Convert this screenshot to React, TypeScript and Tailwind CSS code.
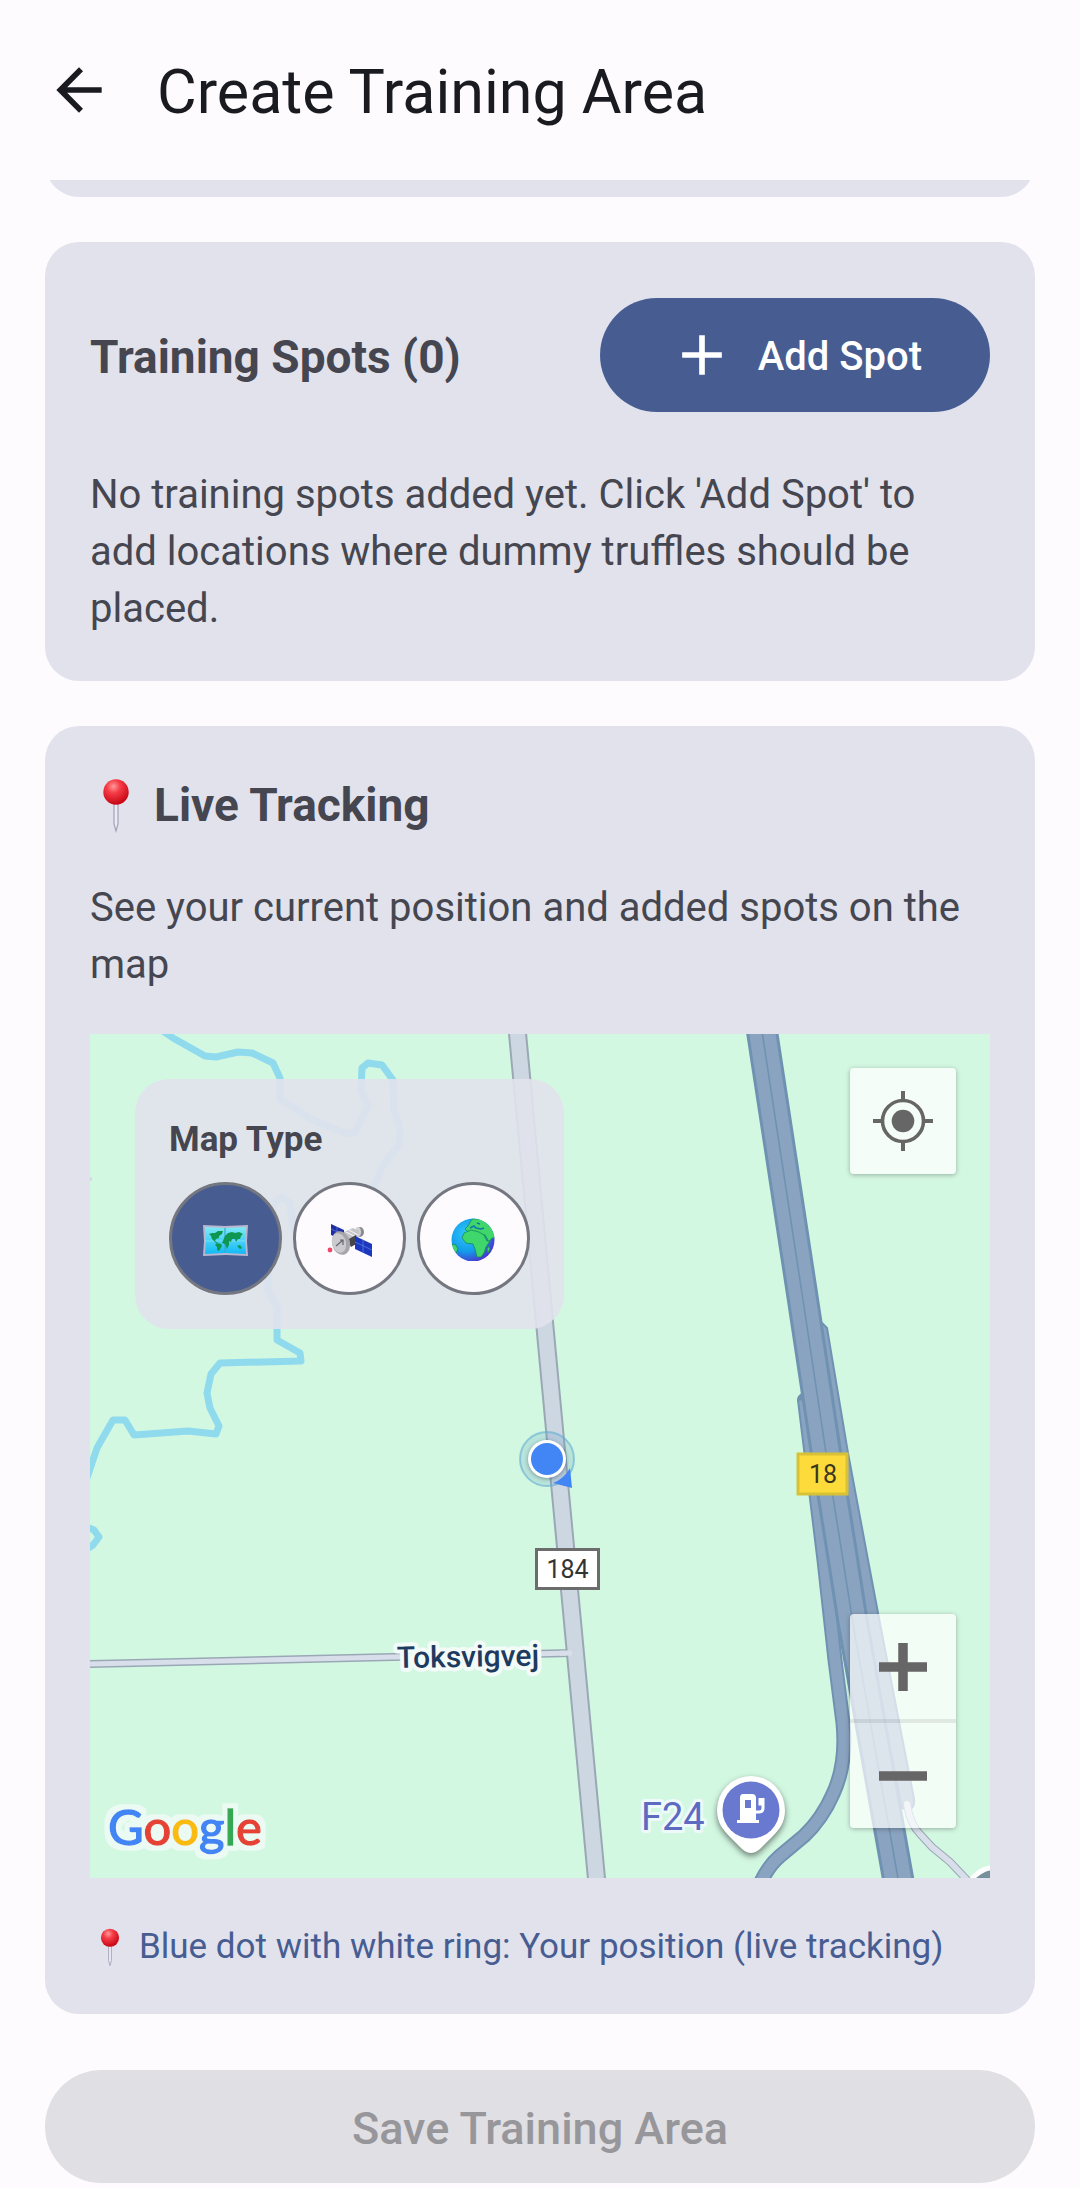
import { useState } from 'react';
import type { ReactNode } from 'react';
import { MdAdd, MdArrowBack } from 'react-icons/md';

type MapType = 'map' | 'satellite' | 'terrain';

const PinIcon = ({ className }: { className: string }) => (
    <svg viewBox="0 0 46 56" className={className} aria-hidden="true">
        <defs>
            <radialGradient id="pin-head" cx="0.4" cy="0.28" r="0.75">
                <stop offset="0" stopColor="#ff9a9a" />
                <stop offset="0.35" stopColor="#f63d48" />
                <stop offset="1" stopColor="#c3000f" />
            </radialGradient>
        </defs>
        <path d="M21 26h4l0 21-2 7-2-7z" fill="#eceaf6" stroke="#a3a1b8" strokeWidth="1.2" />
        <circle cx="23" cy="15" r="12.7" fill="url(#pin-head)" />
    </svg>
);

const WorldMapIcon = () => (
    <svg viewBox="0 0 45 45" className="size-[45px]" aria-hidden="true">
        <defs>
            <linearGradient id="sea" x1="0" y1="0" x2="0" y2="1">
                <stop offset="0" stopColor="#7fe9f5" />
                <stop offset="1" stopColor="#12b9f7" />
            </linearGradient>
        </defs>
        <path d="M0 9l22 1 23-1-1 16 1 15-22-1-23 1 1-15z" fill="#b9b6cf" />
        <path d="M2 11l20 1 21-1-1 14 1 13-21-1-20 1 1-13z" fill="url(#sea)" />
        <path d="M22 12v25" stroke="#3aa5cf" strokeWidth="1.2" />
        <path d="M2 25h40" stroke="#a9f0fa" strokeWidth="0.8" opacity="0.6" />
        <path
            d="M6 18l3-1 3 0 3-2 5 0-1 3-3 2 0 2-3 1-1 2 3 2-2 0-4-4-1-3zM14 27l4 1 1 2-3 5-2-1 0-3-2-2zM22 20l3-3 4-1 3 1 4-1 4 2-2 2-1 3-2 0-2 3-1-3-3 0-1 3-2-1 0 4-2 4-2-5-3-1zM34 30l3-1 2 3-2 1z"
            fill="#109653"
        />
    </svg>
);

const SatelliteIcon = () => (
    <svg viewBox="0 0 45 45" className="size-[45px]" aria-hidden="true">
        <path d="M4 8l13 6v11L4 19z" fill="#1c2fa5" />
        <path d="M4 13l13 6M10 11v10" stroke="#5a75dd" strokeWidth="0.8" />
        <ellipse cx="33" cy="16" rx="4" ry="5" fill="#8b8b92" />
        <ellipse cx="31" cy="16" rx="3" ry="5" fill="#d0d0d4" />
        <path d="M17 16l9-4 6 3-1 7-10 6-4-4z" fill="#c4c4c9" />
        <path d="M19 16l10 5M22 14l9 5" stroke="#f1f1f3" strokeWidth="1.2" />
        <path d="M20 24l9-5 2 8-7 4z" fill="#45454d" />
        <path d="M28 20l17 8v13l-17-8z" fill="#1b37bd" />
        <path d="M28 26l17 8M36 24v13" stroke="#5a78e6" strokeWidth="0.8" />
        <ellipse cx="14" cy="27" rx="9" ry="12" fill="#a5a5aa" transform="rotate(-14 14 27)" />
        <ellipse cx="12" cy="27" rx="7" ry="10" fill="#cbcbcf" transform="rotate(-14 12 27)" />
        <path d="M9 30l7-6M13 24l3 0v5" fill="none" stroke="#65656c" strokeWidth="1.2" />
        <circle cx="3" cy="34" r="2.4" fill="#ee4868" />
    </svg>
);

const GlobeIcon = () => (
    <svg viewBox="0 0 45 45" className="size-[45px]" aria-hidden="true">
        <defs>
            <radialGradient id="ocean" cx="0.35" cy="0.35" r="0.7">
                <stop offset="0" stopColor="#30c8fa" />
                <stop offset="0.6" stopColor="#139bea" />
                <stop offset="1" stopColor="#4a35cf" />
            </radialGradient>
            <clipPath id="globe-clip">
                <circle cx="22" cy="24" r="21.5" />
            </clipPath>
        </defs>
        <circle cx="22" cy="24" r="21.5" fill="url(#ocean)" />
        <g clipPath="url(#globe-clip)" fill="#3fd66c" stroke="#168a55" strokeWidth="0.8">
            <path d="M17 10l4-7 12 0 9 8 3 11-4 0-3 4-4-7-8-2-6-1-4-1-2-2z" />
            <path d="M13 17l7-3 8 2 5 3 3 6 3 0-4 6-2 6-3 4-4 0-2-8-2-5-7-1-4-5z" />
            <path d="M0 28l5 1 2 4-3 6-5-3zM36 33l2-3 1 3-2 4z" />
        </g>
        <path d="M19 12l4-2 2 2 5 1 3-1M26 7l3 1" fill="none" stroke="#1276a8" strokeWidth="1.6" />
    </svg>
);

const MAP_TYPES: { id: MapType; label: string; icon: ReactNode }[] = [
    { id: 'map', label: 'Map', icon: <WorldMapIcon /> },
    { id: 'satellite', label: 'Satellite', icon: <SatelliteIcon /> },
    { id: 'terrain', label: 'Terrain', icon: <GlobeIcon /> },
];

// Roads
const HIGHWAY = 'M671.5 -6L713 266L736 419L743 463L753 526L763 590L809 850';
const SLIP_LEFT = 'M714.5 366L721 419L734 526L745 626L753 689Q757 730 743 760Q732 785 714 802L690 822Q678 832 670 850';
const FOOTPATH = 'M817 770Q820 790 830 800L842 813L860 828L879 848';

const MapCanvas = () => (
    <svg
        viewBox="0 0 900 844"
        preserveAspectRatio="xMidYMid slice"
        className="block size-full font-[Roboto,sans-serif]"
        role="img"
        aria-label="Map"
    >
        <defs>
            <filter id="logo-halo" x="-10%" y="-20%" width="120%" height="140%">
                <feMorphology in="SourceAlpha" operator="dilate" radius="5" result="wide" />
                <feGaussianBlur in="wide" stdDeviation="0.7" result="soft" />
                <feFlood floodColor="#ebfaf2" />
                <feComposite in2="soft" operator="in" result="halo" />
                <feMerge>
                    <feMergeNode in="halo" />
                    <feMergeNode in="SourceGraphic" />
                </feMerge>
            </filter>
        </defs>

        <rect width="900" height="844" fill="#d3f8e2" />

        {/* Streams */}
        <g fill="none" stroke="#90daee" strokeWidth="7" strokeLinejoin="round">
            <path d="M73 -3L83 4L115 22L126 23L148 18L162 19L183 29L190 44L190 65L223 86L257 100L265 98L278 72L271 56L272 34L278 29L292 31L303 46L304 76L310 96L309 111L292 133L285 150L260 196L215 215L203 193L200 169L192 163L185 168L178 200L178 256L187 273L187 306L210 319L211 327L130 329L121 340L117 359L120 374L129 392L126 400L98 397L44 401L35 386L23 386L7 414L-3 444" />
            <path d="M-3 493L4 496L9 503L3 511L-3 515" />
        </g>
        <circle cx="0" cy="145" r="2" fill="#cfd5e4" />

        {/* Toksvigvej */}
        <path d="M-2 630L303 623L482 619" fill="none" stroke="#9aa8b5" strokeWidth="8" />
        <path d="M-2 630L303 623L482 619" fill="none" stroke="#d8dfeb" strokeWidth="5" />

        {/* Road 184 */}
        <path d="M427 -6L507 850" stroke="#9aa8b5" strokeWidth="19" />
        <path d="M427 -6L507 850" stroke="#cdd7e2" strokeWidth="15" />
        <path d="M470 619.3L482 619" stroke="#d8dfeb" strokeWidth="5" />

        {/* Highway 18 with slip roads */}
        <path d={SLIP_LEFT} fill="none" stroke="#7092b2" strokeWidth="15" strokeLinecap="round" />
        <path d={SLIP_LEFT} fill="none" stroke="#8aa3c0" strokeWidth="11" />
        <path d="M731 288L737 294L758 419L778 526L788 579L824 765Q825 774 818 776L812 774L760 520Z" fill="#8aa3c0" stroke="#7092b2" strokeWidth="2" />
        <path d={HIGHWAY} fill="none" stroke="#7092b2" strokeWidth="32" />
        <path d={HIGHWAY} fill="none" stroke="#8aa3c0" strokeWidth="26" />
        <path d={HIGHWAY} fill="none" stroke="#7092b2" strokeWidth="1.6" />
        <path d={FOOTPATH} fill="none" stroke="#9aa8b5" strokeWidth="8" />
        <path d={FOOTPATH} fill="none" stroke="#d8dfeb" strokeWidth="6" strokeLinecap="round" />

        {/* Road signs */}
        <rect x="446.5" y="515.5" width="62" height="39" fill="#fff" stroke="#6c6c6c" strokeWidth="3" />
        <text x="477.5" y="544" fontSize="25" textAnchor="middle" fill="#333">184</text>
        <rect x="708" y="420" width="49" height="40" fill="#fddb3a" stroke="#d9c136" strokeWidth="3" />
        <text x="733" y="449" fontSize="25" textAnchor="middle" fill="#3a3720">18</text>

        <text
            x="307"
            y="634"
            fontSize="30"
            fontWeight="500"
            fill="#1f3a5f"
            stroke="#f3fbf9"
            strokeWidth="8"
            strokeLinejoin="round"
            paintOrder="stroke"
            transform="rotate(-1 307 634)"
        >
            Toksvigvej
        </text>

        {/* Fuel station */}
        <text
            x="551"
            y="796"
            fontSize="38"
            fill="#5c6bc0"
            stroke="#edf9fb"
            strokeWidth="6"
            strokeLinejoin="round"
            paintOrder="stroke"
        >
            F24
        </text>
        <g>
            <path
                d="M661 742a34 34 0 0 1 34 34c0 13-6 20-14 28l-11 11q-9 8-18 0l-11-11c-8-8-14-15-14-28a34 34 0 0 1 34-34z"
                fill="#fff"
                className="drop-shadow-[0_3px_3px_rgba(0,0,0,0.5)]"
            />
            <circle cx="661" cy="776" r="28.5" fill="#6979d0" />
            <path d="M653 760h9q4 0 4 4v22h3v3h-22v-3h3v-22q0-4 3-4z" fill="#fff" />
            <rect x="655" y="766" width="6" height="8" fill="#6979d0" />
            <path d="M665 778h4q4 0 4-4v-10M670 764v6h3" fill="none" stroke="#fff" strokeWidth="3" />
        </g>

        <circle cx="905" cy="862" r="31" fill="#fff" />
        <circle cx="905" cy="862" r="26" fill="#78909c" />

        {/* Current position */}
        <circle cx="457" cy="425" r="27" fill="#5aa0c8" fillOpacity="0.22" stroke="#63aed0" strokeOpacity="0.6" strokeWidth="2" />
        <path d="M480 434L482 454L463 449Q474 445 480 434z" fill="#4285f4" />
        <circle cx="457" cy="425" r="19" fill="#fff" className="drop-shadow-[0_1px_2px_rgba(0,0,0,0.35)]" />
        <circle cx="457" cy="425" r="16" fill="#4285f4" />

        <text x="18" y="811" fontSize="49" className="font-[Lato,sans-serif]" strokeWidth="1.4" filter="url(#logo-halo)">
            <tspan fill="#4285f4" stroke="#4285f4">G</tspan>
            <tspan fill="#e54335" stroke="#e54335">o</tspan>
            <tspan fill="#f9bc0a" stroke="#f9bc0a">o</tspan>
            <tspan fill="#4285f4" stroke="#4285f4">g</tspan>
            <tspan fill="#34a853" stroke="#34a853">l</tspan>
            <tspan fill="#e54335" stroke="#e54335">e</tspan>
        </text>
    </svg>
);

const App = () => {
    const [mapType, setMapType] = useState<MapType>('map');

    return (
        <div className="min-h-screen bg-[#fefbff] font-[Roboto,sans-serif] text-[#45464f]">
            <header className="flex h-[180px] items-center gap-[44px] px-[45px] text-[#1a1b20]">
                <button type="button" aria-label="Back">
                    <MdArrowBack className="size-[68px]" />
                </button>
                <h1 className="pt-1 text-[61px] leading-[80px]">Create Training Area</h1>
            </header>

            <main className="flex flex-col gap-[45px] px-[45px]">
                {/* End of the card scrolled under the header */}
                <div className="flex h-[17px] items-end overflow-hidden">
                    <div className="h-[80px] w-full rounded-b-[34px] bg-[#e1e2ec]" />
                </div>

                <section className="rounded-[34px] bg-[#e1e2ec] px-[45px] pt-[45px] pb-[44px]">
                    <div className="flex h-[135px] items-center justify-between">
                        <h2 className="pt-1 text-[46px] leading-[68px] font-bold">Training Spots (0)</h2>
                        <button
                            type="button"
                            className="flex h-[114px] items-center gap-[22px] rounded-full bg-[#475d92] px-[68px] text-[40px] font-medium text-white"
                        >
                            <MdAdd className="size-[68px]" />
                            <span className="pt-1">Add Spot</span>
                        </button>
                    </div>
                    <p className="mt-[44px] text-[40px] leading-[57px]">
                        No training spots added yet. Click 'Add Spot' to add locations where dummy truffles should be placed.
                    </p>
                </section>

                <section className="rounded-[34px] bg-[#e1e2ec] px-[45px] pt-[45px] pb-[44px]">
                    <h2 className="flex items-center gap-[12px] text-[46px] leading-[68px] font-bold">
                        <PinIcon className="h-[56px] w-[52px]" />
                        Live Tracking
                    </h2>
                    <p className="mt-[40px] text-[40px] leading-[57px]">
                        See your current position and added spots on the map
                    </p>

                    <div className="relative mt-[41px] h-[844px] overflow-hidden">
                        <MapCanvas />

                        <div className="absolute top-[45px] left-[45px] rounded-[34px] bg-[#e1e2ec]/90 p-[34px]">
                            <h3 className="pt-1 text-[35px] leading-[45px] font-bold">Map Type</h3>
                            <div className="mt-[20px] flex gap-[11px]">
                                {MAP_TYPES.map((type) => (
                                    <button
                                        key={type.id}
                                        type="button"
                                        aria-label={type.label}
                                        aria-pressed={mapType === type.id}
                                        onClick={() => setMapType(type.id)}
                                        className={`flex size-[113px] items-center justify-center rounded-full border-3 border-[#757780] ${
                                            mapType === type.id ? 'bg-[#475d92]' : 'bg-[#fefbff]'
                                        }`}
                                    >
                                        {type.icon}
                                    </button>
                                ))}
                            </div>
                        </div>

                        <button
                            type="button"
                            aria-label="My location"
                            className="absolute top-[34px] right-[34px] flex size-[106px] items-center justify-center rounded-[4px] bg-white/75 shadow-[0_1px_5px_rgba(0,0,0,0.3)]"
                        >
                            <svg viewBox="0 0 60 60" className="size-[60px]" aria-hidden="true">
                                <circle cx="30" cy="30" r="20.5" fill="none" stroke="#666" strokeWidth="3.6" />
                                <circle cx="30" cy="30" r="11.3" fill="#666" />
                                <path d="M30 0v9M30 51v9M0 30h9M51 30h9" stroke="#666" strokeWidth="4" />
                            </svg>
                        </button>

                        <div className="absolute right-[34px] bottom-[50px] flex flex-col rounded-[4px] bg-white/70 shadow-[0_1px_5px_rgba(0,0,0,0.3)]">
                            <button
                                type="button"
                                aria-label="Zoom in"
                                className="flex h-[109px] w-[106px] items-center justify-center border-b-4 border-black/8"
                            >
                                <svg viewBox="0 0 48 48" className="size-[48px]" aria-hidden="true">
                                    <path d="M24 0v48M0 24h48" stroke="#666" strokeWidth="9.5" />
                                </svg>
                            </button>
                            <button
                                type="button"
                                aria-label="Zoom out"
                                className="flex h-[105px] w-[106px] items-center justify-center"
                            >
                                <svg viewBox="0 0 48 48" className="size-[48px]" aria-hidden="true">
                                    <path d="M0 24h48" stroke="#666" strokeWidth="9.5" />
                                </svg>
                            </button>
                        </div>
                    </div>

                    <p className="mt-[46px] flex items-center gap-[9px] text-[35px] leading-[46px] text-[#475d92]">
                        <PinIcon className="h-[40px] w-[40px]" />
                        Blue dot with white ring: Your position (live tracking)
                    </p>
                </section>

                <button
                    type="button"
                    disabled
                    className="mt-[11px] mb-[5px] h-[113px] w-full rounded-full bg-[#e0dfe3] pt-1 text-[45px] font-medium text-[#97969b]"
                >
                    Save Training Area
                </button>
            </main>
        </div>
    );
};

export default App;
